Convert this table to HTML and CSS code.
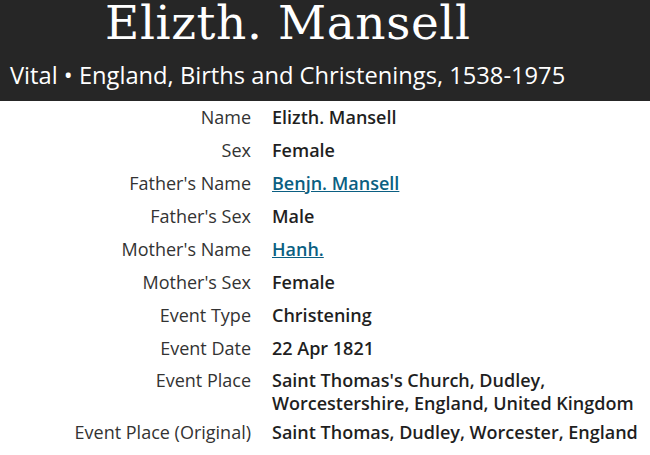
FILE: index.html
```html
<!DOCTYPE html>
<html>
<head>
<meta charset="utf-8">
<link rel="stylesheet" href="styles.css">
</head>
<body>
<header class="hero">
  <h1 class="title">Elizth. Mansell</h1>
  <p class="subtitle">Vital • England, Births and Christenings, 1538-1975</p>
</header>
<dl class="facts">
  <div class="row"><dt>Name</dt><dd>Elizth. Mansell</dd></div>
  <div class="row"><dt>Sex</dt><dd>Female</dd></div>
  <div class="row"><dt>Father's Name</dt><dd><a href="#">Benjn. Mansell</a></dd></div>
  <div class="row"><dt>Father's Sex</dt><dd>Male</dd></div>
  <div class="row"><dt>Mother's Name</dt><dd><a href="#">Hanh.</a></dd></div>
  <div class="row"><dt>Mother's Sex</dt><dd>Female</dd></div>
  <div class="row"><dt>Event Type</dt><dd>Christening</dd></div>
  <div class="row"><dt>Event Date</dt><dd>22 Apr 1821</dd></div>
  <div class="row row-multi"><dt>Event Place</dt><dd>Saint Thomas's Church, Dudley, Worcestershire, England, United Kingdom</dd></div>
  <div class="row"><dt>Event Place (Original)</dt><dd>Saint Thomas, Dudley, Worcester, England</dd></div>
</dl>
</body>
</html>
```
FILE: styles.css
```css
html, body {
  margin: 0;
  padding: 0;
  background: #ffffff;
}
body {
  font-family: "Open Sans", "Noto Sans", sans-serif;
  width: 650px;
  overflow: hidden;
}
.hero {
  background: #262626;
  color: #ffffff;
  height: 101px;
  box-sizing: border-box;
  padding: 0 10px;
  overflow: hidden;
}
.title {
  margin: -1px 0 0 95px;
  font-family: "DejaVu Serif", serif;
  font-weight: 400;
  font-size: 47px;
  line-height: 47px;
  letter-spacing: 0.6px;
  white-space: nowrap;
}
.subtitle {
  margin: 14px 0 0 0;
  font-size: 23.7px;
  line-height: 30px;
  white-space: nowrap;
}
.facts {
  margin: 0;
  padding: 0;
}
.row {
  display: grid;
  grid-template-columns: 251px 1fr;
  column-gap: 21px;
  padding: 5px 0;
}
.row-multi {
  padding: 4px 0 1px;
}
dt {
  text-align: right;
  color: #333333;
  font-size: 18px;
  line-height: 23px;
}
dd {
  margin: 0;
  color: #1f1f1f;
  font-weight: 600;
  font-size: 18px;
  line-height: 23px;
}
dd a {
  color: #0b5f82;
  text-decoration: underline;
}
```
